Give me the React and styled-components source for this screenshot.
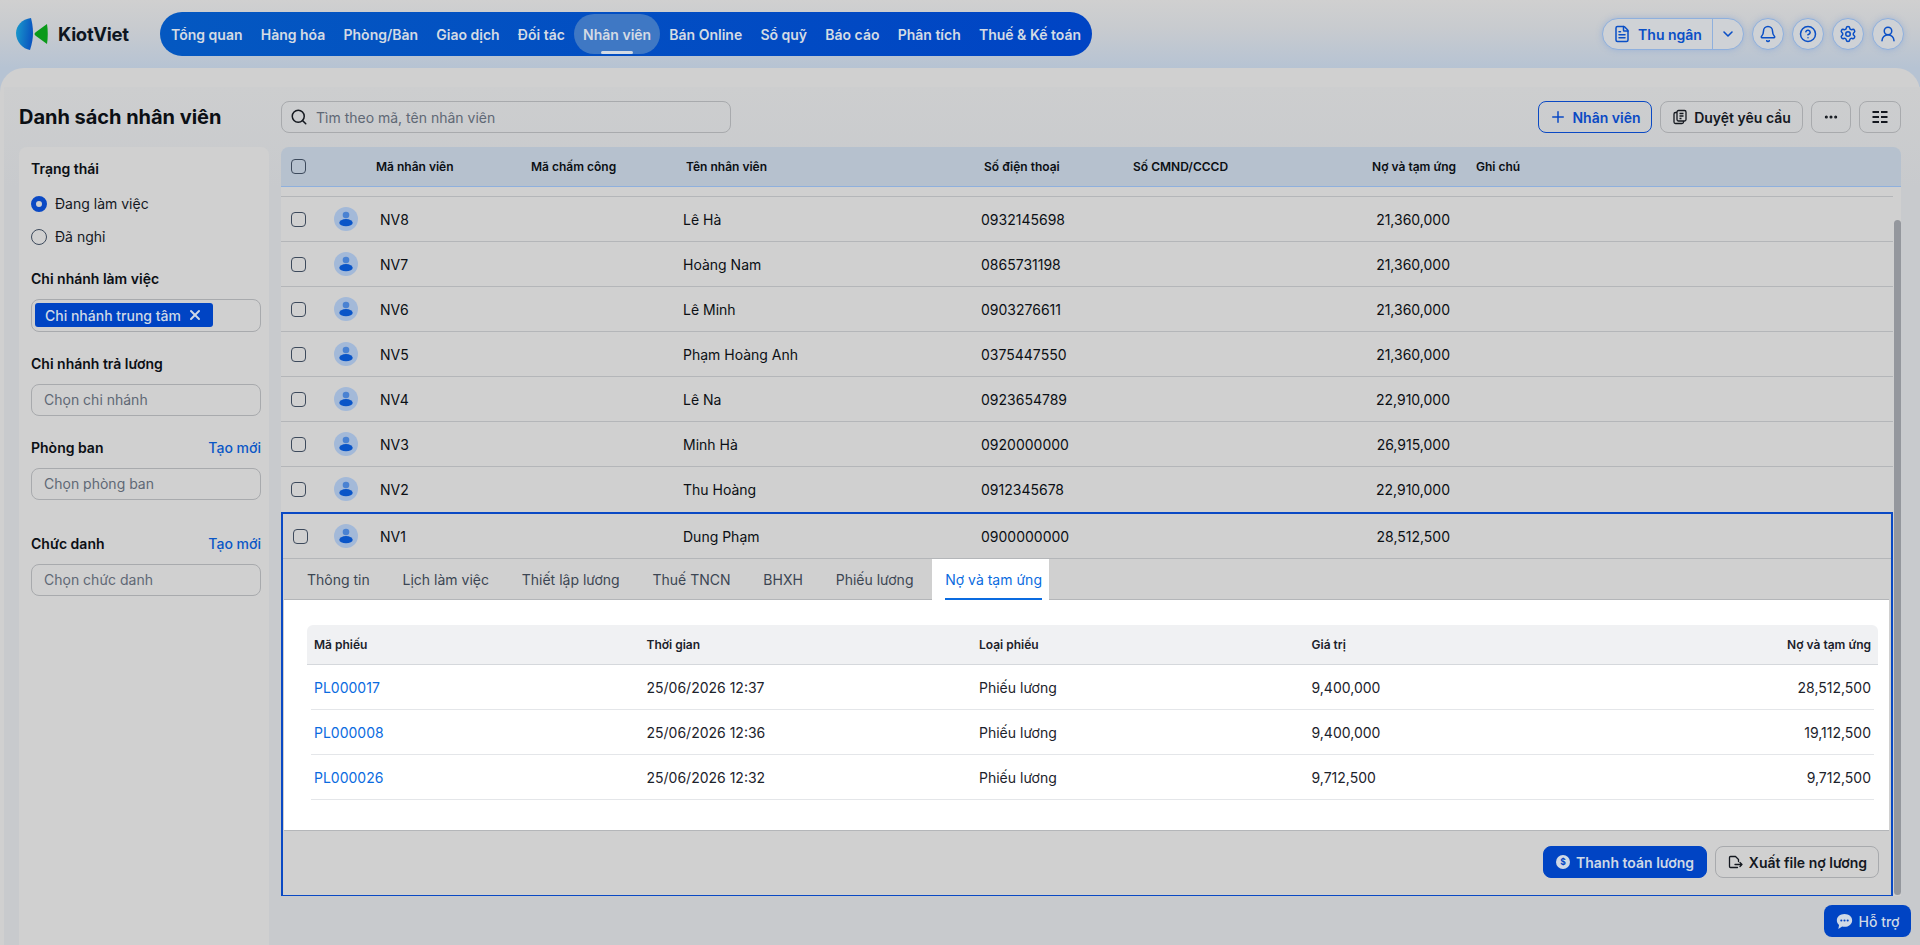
import React from 'react';
import styled, { createGlobalStyle } from 'styled-components';
import { Search, FileText, ChevronDown, Bell, CircleHelp, Settings, UserRound, Plus, Ellipsis, X } from 'lucide-react';

const Global = createGlobalStyle`
  html, body { margin: 0; padding: 0; height: 100%; overflow: hidden; }
  body { font-family: Inter, "Noto Sans", sans-serif; color: #0b0f14; background: #c8cbcf; }
  * { box-sizing: border-box; }
`;
const Page = styled.div`
  position: relative; width: 1920px; height: 945px; overflow: hidden; display: flex; flex-direction: column;
  background: linear-gradient(180deg, #d0d0d0 0px, #c8cbcf 28px, #b6c3d3 68px, #b6c3d3 100px);
`;
const Top = styled.header`
  height: 68px; flex: none; display: flex; align-items: center; padding: 0 16px 0 16px;
`;
const Logo = styled.div`
  display: flex; align-items: center; gap: 10px; width: 144px; font-size: 18.5px; font-weight: 700; letter-spacing: -0.3px; color: #0e1621;
`;
const Nav = styled.nav`
  height: 44px; width: 932px; border-radius: 22px; display: flex; align-items: center; padding: 0 2px;
  background: linear-gradient(90deg, #0458c1, #0044c4);
`;
const NavItem = styled.a`
  position: relative; height: 40px; display: flex; align-items: center; padding: 0 9.1px; border-radius: 20px;
  font-size: 14px; font-weight: 600; color: #d4dbe4; white-space: nowrap;
  background: ${p => p.$active ? '#3f78c4' : 'transparent'};
  ${p => p.$active && `&::after { content: ''; position: absolute; left: 50%; bottom: 0; width: 32px; height: 3px; margin-left: -16px; border-radius: 2px; background: #d4dbe4; }`}
`;
const TopRight = styled.div`
  margin-left: auto; display: flex; align-items: center; gap: 8px;
`;
const Split = styled.div`
  display: flex; height: 32px; width: 142px; border-radius: 16px; border: 1px solid #8fb0dd; color: #0a4fc6; font-size: 14px; font-weight: 600;
  box-shadow: 0 0 6px rgba(90,140,220,.35); background: #cfd2d6;
`;
const SplitMain = styled.div`
  flex: 1; display: flex; align-items: center; justify-content: center; gap: 7px; border-right: 1px solid #8fb0dd;
`;
const SplitArrow = styled.div` width: 30px; display: flex; align-items: center; justify-content: center; `;
const RoundBtn = styled.div`
  width: 32px; height: 32px; border-radius: 50%; border: 1px solid #8fb0dd; background: #cfd2d6; color: #0a4fc6;
  display: flex; align-items: center; justify-content: center; box-shadow: 0 0 6px rgba(90,140,220,.35);
`;
const Main = styled.main`
  flex: 1; min-height: 0; background: #d0d0d0; border-radius: 24px 24px 0 0; padding: 19px 0 0 4px; display: flex;
`;
const Inner = styled.div`
  flex: 1; min-width: 0; padding: 0 19px 0 15px; display: grid; grid-template-columns: 250px 1fr; column-gap: 12px;
  grid-template-rows: 60px 1fr; background: linear-gradient(180deg, #cdcecf, #c8cacd 100px);
`;
const Title = styled.h1`
  margin: 0; font-size: 20px; font-weight: 700; align-self: start; padding-top: 18px; line-height: 24px; letter-spacing: -0.03px;
  color: #0b0f14;
`;
const Toolbar = styled.div`
  display: flex; align-items: flex-start; padding-top: 14px; gap: 8px;
`;
const SearchBox = styled.div`
  width: 450px; height: 32px; border: 1px solid #a8aaad; border-radius: 8px; display: flex; align-items: center; gap: 8px; padding: 0 8px; color: #5f6875; font-size: 14px; margin-right: auto;
`;
const Btn = styled.div`
  height: 32px; border-radius: 8px; display: flex; align-items: center; justify-content: center; gap: ${p => p.$gap || 6}px; font-size: 14px; font-weight: 600; white-space: nowrap;
  width: ${p => p.$w}px;
  border: 1px solid ${p => p.$outline ? '#0a49c4' : p.$primary ? '#0044c4' : '#a8aaad'};
  color: ${p => p.$outline ? '#0a49c4' : p.$primary ? '#cfd9e6' : '#14181f'};
  background: ${p => p.$primary ? '#0044c4' : 'transparent'};
`;
const Side = styled.aside`
  background: #d0d0d0; border-radius: 8px 8px 0 0; padding: 12px 8px 0 12px; display: flex; flex-direction: column;
`;
const FilterLabel = styled.div`
  display: flex; justify-content: space-between; font-size: 14px; font-weight: 600; line-height: 20px; color: #0b0f14; margin-top: ${p => p.$mt || 0}px;
`;
const CreateLink = styled.span` font-weight: 500; color: #0a57c6; `;
const Radio = styled.div`
  display: flex; align-items: center; gap: 8px; font-size: 14px; line-height: 20px; color: #14181f; margin-top: ${p => p.$mt}px;
`;
const RadioDot = styled.span`
  width: 16px; height: 16px; border-radius: 50%; flex: none;
  ${p => p.$on ? 'border: 5px solid #0a49c4; background: #d0d0d0;' : 'border: 1px solid #3d4a5c;'}
`;
const Field = styled.div`
  height: ${p => p.$h || 32}px; margin-top: 10px; border: 1px solid #a8aaad; border-radius: 8px; display: flex; align-items: center; padding: 0 ${p => p.$tag ? 3 : 12}px 1px; font-size: 14px; color: #5f6875;
`;
const Tag = styled.span`
  height: 24px; border-radius: 3px; background: #0044c4; color: #cfd9e6; display: inline-flex; align-items: center; gap: 6px; padding: 0 10px 0 10px; font-size: 14px; font-weight: 500;
`;
const TableArea = styled.section`
  min-width: 0; min-height: 0; display: flex; flex-direction: column; position: relative; padding-bottom: 49px;
`;
const HeadRow = styled.div`
  flex: none; height: 40px; background: #b6c1ce; border-bottom: 1px solid #8fb0dd; border-radius: 8px 8px 0 0;
  display: grid; grid-template-columns: 95px 155px 155px 298px 149px 150px 173px 1fr; align-items: center; font-size: 12px; font-weight: 600; color: #0b0f14;
`;
const Check = styled.span`
  display: block; width: 15px; height: 15px; border-radius: 4px; border: 1px solid #3d4a5c; margin-left: 10px;
`;
const HeadRight = styled.span` text-align: right; `;
const HeadNote = styled.span` padding-left: 20px; `;
const Scroll = styled.div`
  flex: 1; min-height: 0; padding: 9px 8px 0 0; display: flex; flex-direction: column; position: relative; background: #d0d0d0;
`;
const Row = styled.div`
  height: 45px; flex: none; border-top: 1px solid #b4b6b9; display: grid; align-items: center; font-size: 14px; color: #0b0f14;
  grid-template-columns: 53px 46px 303px 298px 299px 170px 1fr;
`;
const Bar = styled.div`
  position: absolute; right: 0; top: 33px; width: 7px; height: 675px; border-radius: 4px; background: #94979d;
`;
const Avatar = styled.span`
  width: 24px; height: 24px; border-radius: 50%; background: #a3b9d8; display: block;
`;
const Debt = styled.span` text-align: right; `;
const Detail = styled.div`
  flex: none; height: 384px; margin-top: 1px; border: 2px solid #0a49c4; border-bottom-width: 1px; display: flex; flex-direction: column;
`;
const DetailRow = styled.div`
  flex: none; height: 45px; border-bottom: 1px solid #b4b6b9; display: grid; align-items: center; font-size: 14px;
  grid-template-columns: 51px 46px 303px 298px 299px 170px 1fr;
`;
const Tabs = styled.div`
  flex: none; height: 40px; display: flex; padding-left: 10px;
`;
const Tab = styled.div`
  height: 41px; padding: 0 14px; display: flex; align-items: center; font-size: 14px; color: #3c4653; position: relative; white-space: nowrap; margin-right: 4.8px;
`;
const ActiveTab = styled(Tab)`
  color: #0a6be0; background: #fff; padding: 0 7px 0 13px; margin: 0; z-index: 1;
  &::after { content: ''; position: absolute; left: 13px; right: 7px; bottom: 0; height: 2px; background: #0a6be0; }
`;
const WhitePane = styled.div`
  flex: none; height: 232px; background: #fff; border-top: 1px solid #b4b6b9; border-bottom: 1px solid #b4b6b9; margin: 0 2px 0 1px; padding: 25px 11px 0 23px;
`;
const SubHead = styled.div`
  height: 40px; border-radius: 6px 6px 0 0; background: #f0f1f3; border-bottom: 1px solid #d5d8dc; display: grid; grid-template-columns: 332.5px 332.5px 332.5px 300px 1fr; align-items: center; padding: 0 7px; font-size: 12px; font-weight: 600; color: #1c222b;
`;
const SubRow = styled.div`
  height: 45px; margin: 0 4px; border-bottom: 1px solid #e4e6e9; display: grid; grid-template-columns: 332.5px 332.5px 332.5px 300px 1fr; align-items: center; padding: 0 3px; font-size: 14px; color: #1c222b;
`;
const CodeLink = styled.a` color: #0a6be0; `;
const Foot = styled.div`
  flex: 1; display: flex; justify-content: flex-end; align-items: flex-start; gap: 8px; padding: 15px 12px 0 0;
`;
const Support = styled.div`
  position: absolute; right: 9px; bottom: 8px; width: 87px; height: 32px; border-radius: 8px; background: #0044c4; color: #cfd9e6; display: flex; align-items: center; justify-content: center; gap: 6px; font-size: 14px; font-weight: 500;
`;

const navs = ['Tổng quan','Hàng hóa','Phòng/Bàn','Giao dịch','Đối tác','Nhân viên','Bán Online','Sổ quỹ','Báo cáo','Phân tích','Thuế & Kế toán'];
const rows = [
  ['NV8','Lê Hà','0932145698','21,360,000'],
  ['NV7','Hoàng Nam','0865731198','21,360,000'],
  ['NV6','Lê Minh','0903276611','21,360,000'],
  ['NV5','Phạm Hoàng Anh','0375447550','21,360,000'],
  ['NV4','Lê Na','0923654789','22,910,000'],
  ['NV3','Minh Hà','0920000000','26,915,000'],
  ['NV2','Thu Hoàng','0912345678','22,910,000'],
];
const subs = [
  ['PL000017','25/06/2026 12:37','Phiếu lương','9,400,000','28,512,500'],
  ['PL000008','25/06/2026 12:36','Phiếu lương','9,400,000','19,112,500'],
  ['PL000026','25/06/2026 12:32','Phiếu lương','9,712,500','9,712,500'],
];
const AvatarIcon = () => (
  <Avatar>
    <svg width="24" height="24" viewBox="0 0 24 24">
      <circle cx="12" cy="8" r="3.3" fill="#4a82d2" />
      <ellipse cx="12" cy="15.7" rx="6.7" ry="3.6" fill="#0a55c8" />
    </svg>
  </Avatar>
);
const LogoMark = () => (
  <svg width="32" height="32" viewBox="0 0 32 32">
    <defs>
      <linearGradient id="kvb" x1="0" y1="0" x2="1" y2="0.2">
        <stop offset="0" stopColor="#1a9ccc" /><stop offset="1" stopColor="#0a56c0" />
      </linearGradient>
    </defs>
    <path d="M15 0 C6 1 0 8 0 15 C0 24 7 31 14 32 C16 26 17 20 17 15 C17 9 16 4 15 0Z" fill="url(#kvb)" />
    <path d="M31 6 C32 12 32 20 31 26 L20 18 Q17 16 20 14 Z" fill="#0a9a1a" />
  </svg>
);
const ColumnsIcon = () => (
  <svg width="16" height="16" viewBox="0 0 16 16" fill="#14181f">
    <rect x="0.5" y="2" width="6.500" height="2"/><rect x="9" y="2" width="6.500" height="2"/>
    <rect x="0.5" y="7" width="6.500" height="2"/><rect x="9" y="7" width="6.500" height="2"/>
    <rect x="0.5" y="12" width="6.500" height="2"/><rect x="9" y="12" width="6.500" height="2"/>
  </svg>
);
const ApproveIcon = () => (
  <svg width="16" height="16" viewBox="0 0 16 16" fill="none" stroke="#14181f" strokeWidth="1.3">
    <rect x="5" y="1.500" width="9" height="10.500" rx="1.500"/>
    <path d="M7.500 4.500h4M7.500 7h4M7.500 9.500h2"/>
    <path d="M5 3.500H3.500A1.500 1.500 0 0 0 2 5v8a1.500 1.500 0 0 0 1.500 1.500H10a1.500 1.500 0 0 0 1.500-1.500V12"/>
  </svg>
);
const CoinIcon = () => (
  <svg width="14" height="14" viewBox="0 0 14 14">
    <circle cx="7" cy="7" r="7" fill="#cfd9e6"/>
    <text x="7" y="10" textAnchor="middle" fontSize="8.500" fontWeight="700" fontFamily="Inter" fill="#0044c4">$</text>
  </svg>
);
const ExportIcon = () => (
  <svg width="16" height="16" viewBox="0 0 16 16" fill="none" stroke="#14181f" strokeWidth="1.300" strokeLinecap="round" strokeLinejoin="round">
    <path d="M10.500 13.500H3.500a1 1 0 0 1-1-1v-9a1 1 0 0 1 1-1h5l3 3v2"/>
    <path d="M8 10.500h7M13 8.500l2 2-2 2"/>
  </svg>
);
const ChatIcon = () => (
  <svg width="17" height="17" viewBox="0 0 16 16">
    <path d="M8 1C3.900 1 .8 3.600 .8 7c0 1.700.8 3.200 2.100 4.300L2.200 15l3.600-2.200c.7.2 1.400.2 2.200.2 4.100 0 7.200-2.600 7.200-6S12.100 1 8 1Z" fill="#cfd9e6"/>
    <circle cx="5" cy="7" r="1" fill="#0044c4"/><circle cx="8" cy="7" r="1" fill="#0044c4"/><circle cx="11" cy="7" r="1" fill="#0044c4"/>
  </svg>
);

export default function App() {
  return (
    <Page>
      <Global />
      <Top>
        <Logo><LogoMark />KiotViet</Logo>
        <Nav>
          {navs.map(n => <NavItem key={n} $active={n === 'Nhân viên'}>{n}</NavItem>)}
        </Nav>
        <TopRight>
          <Split>
            <SplitMain><FileText size={18} />Thu ngân</SplitMain>
            <SplitArrow><ChevronDown size={16} strokeWidth={2.4} /></SplitArrow>
          </Split>
          <RoundBtn><Bell size={18} /></RoundBtn>
          <RoundBtn><CircleHelp size={18} /></RoundBtn>
          <RoundBtn><Settings size={18} /></RoundBtn>
          <RoundBtn><UserRound size={18} /></RoundBtn>
        </TopRight>
      </Top>
      <Main>
        <Inner>
          <Title>Danh sách nhân viên</Title>
          <Toolbar>
            <SearchBox><Search size={18} color="#14181f" />Tìm theo mã, tên nhân viên</SearchBox>
            <Btn $outline $w={114} $gap={5}><Plus size={18} />Nhân viên</Btn>
            <Btn $w={143}><ApproveIcon />Duyệt yêu cầu</Btn>
            <Btn $w={40}><Ellipsis size={16} strokeWidth={2.6} /></Btn>
            <Btn $w={42}><ColumnsIcon /></Btn>
          </Toolbar>
          <Side>
            <FilterLabel>Trạng thái</FilterLabel>
            <Radio $mt={15}><RadioDot $on />Đang làm việc</Radio>
            <Radio $mt={13}><RadioDot />Đã nghỉ</Radio>
            <FilterLabel $mt={22}>Chi nhánh làm việc</FilterLabel>
            <Field $h={33} $tag><Tag>Chi nhánh trung tâm<X size={16} strokeWidth={3} /></Tag></Field>
            <FilterLabel $mt={22}>Chi nhánh trả lương</FilterLabel>
            <Field>Chọn chi nhánh</Field>
            <FilterLabel $mt={22}>Phòng ban<CreateLink>Tạo mới</CreateLink></FilterLabel>
            <Field>Chọn phòng ban</Field>
            <FilterLabel $mt={34}>Chức danh<CreateLink>Tạo mới</CreateLink></FilterLabel>
            <Field>Chọn chức danh</Field>
          </Side>
          <TableArea>
            <HeadRow>
              <Check />
              <span>Mã nhân viên</span>
              <span>Mã chấm công</span>
              <span>Tên nhân viên</span>
              <span>Số điện thoại</span>
              <span>Số CMND/CCCD</span>
              <HeadRight>Nợ và tạm ứng</HeadRight>
              <HeadNote>Ghi chú</HeadNote>
            </HeadRow>
            <Scroll>
              {rows.map(r => (
                <Row key={r[0]}>
                  <Check />
                  <AvatarIcon />
                  <span>{r[0]}</span>
                  <span>{r[1]}</span>
                  <span>{r[2]}</span>
                  <Debt>{r[3]}</Debt>
                </Row>
              ))}
              <Detail>
                <DetailRow>
                  <Check />
                  <AvatarIcon />
                  <span>NV1</span>
                  <span>Dung Phạm</span>
                  <span>0900000000</span>
                  <Debt>28,512,500</Debt>
                </DetailRow>
                <Tabs>
                  {['Thông tin','Lịch làm việc','Thiết lập lương','Thuế TNCN','BHXH','Phiếu lương'].map(t => <Tab key={t}>{t}</Tab>)}
                  <ActiveTab>Nợ và tạm ứng</ActiveTab>
                </Tabs>
                <WhitePane>
                  <SubHead>
                    <span>Mã phiếu</span><span>Thời gian</span><span>Loại phiếu</span>
                    <span>Giá trị</span><Debt>Nợ và tạm ứng</Debt>
                  </SubHead>
                  {subs.map(s => (
                    <SubRow key={s[0]}>
                      <CodeLink>{s[0]}</CodeLink><span>{s[1]}</span><span>{s[2]}</span><span>{s[3]}</span><Debt>{s[4]}</Debt>
                    </SubRow>
                  ))}
                </WhitePane>
                <Foot>
                  <Btn $primary $w={164}><CoinIcon />Thanh toán lương</Btn>
                  <Btn $w={164}><ExportIcon />Xuất file nợ lương</Btn>
                </Foot>
              </Detail>
              <Bar />
            </Scroll>
          </TableArea>
        </Inner>
      </Main>
      <Support><ChatIcon />Hỗ trợ</Support>
    </Page>
  );
}
